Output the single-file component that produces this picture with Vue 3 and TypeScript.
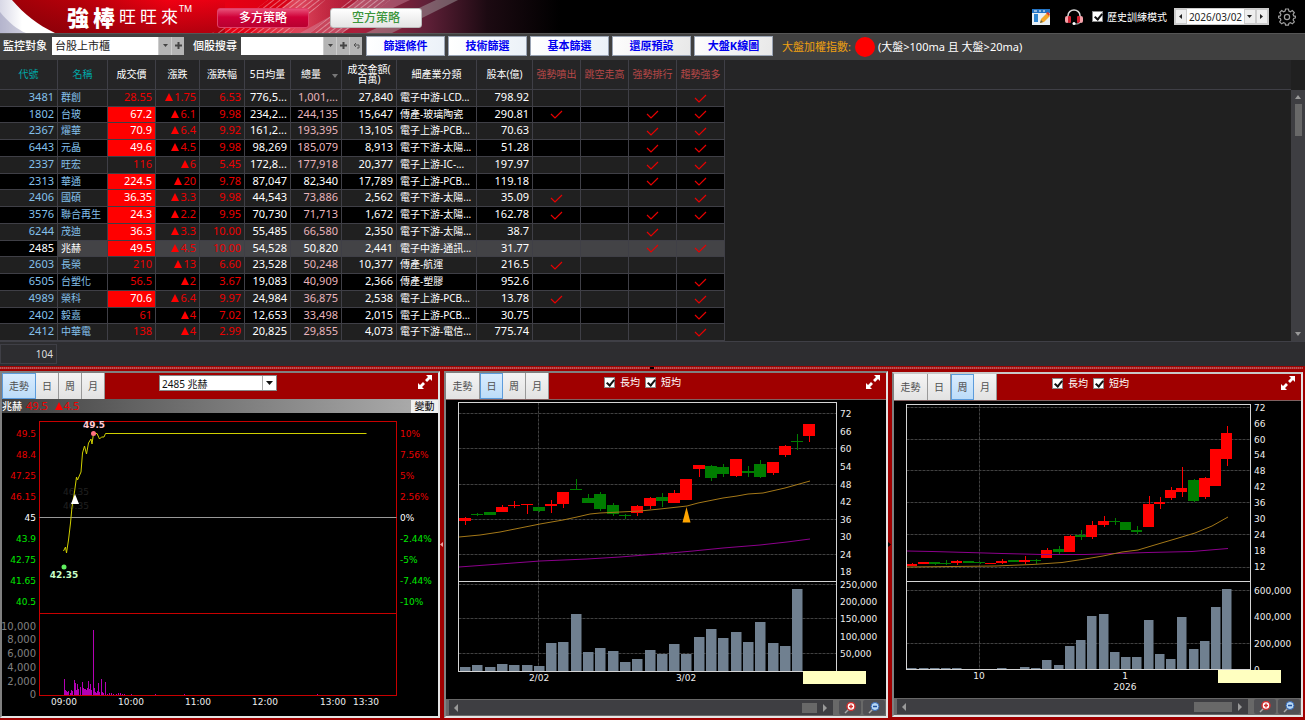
<script setup lang="ts">
import { ref } from 'vue'

interface Stock {
  code: string
  name: string
  price: string
  limit: boolean
  change: string
  pct: string
  avg: string
  total: string
  plain?: boolean
  amount: string
  sector: string
  capital: string
  marks: string
}

const raw: [string, string, string, number, string, string, string, string, string, string, string, string][] = [
  ['3481', '群創', '28.55', 0, '1.75', '6.53', '776,5...', '1,001,...', '27,840', '電子中游-LCD...', '798.92', '0001'],
  ['1802', '台玻', '67.2', 1, '6.1', '9.98', '234,2...', '244,135', '15,647', '傳產-玻璃陶瓷', '290.81', '1011'],
  ['2367', '燿華', '70.9', 1, '6.4', '9.92', '161,2...', '193,395', '13,105', '電子上游-PCB...', '70.63', '0011'],
  ['6443', '元晶', '49.6', 1, '4.5', '9.98', '98,269', '185,079', '8,913', '電子下游-太陽...', '51.28', '0011'],
  ['2337', '旺宏', '116', 0, '6', '5.45', '172,8...', '177,918', '20,377', '電子上游-IC-...', '197.97', '0011'],
  ['2313', '華通', '224.5', 1, '20', '9.78', '87,047', '82,340', '17,789', '電子上游-PCB...', '119.18', '0011'],
  ['2406', '國碩', '36.35', 1, '3.3', '9.98', '44,543', '73,886', '2,562', '電子下游-太陽...', '35.09', '1001'],
  ['3576', '聯合再生', '24.3', 1, '2.2', '9.95', '70,730', '71,713', '1,672', '電子下游-太陽...', '162.78', '1011'],
  ['6244', '茂迪', '36.3', 1, '3.3', '10.00', '55,485', '66,580', '2,350', '電子下游-太陽...', '38.7', '0010'],
  ['2485', '兆赫', '49.5', 1, '4.5', '10.00', '54,528', '50,820', '2,441', '電子中游-通訊...', '31.77', '0011'],
  ['2603', '長榮', '210', 0, '13', '6.60', '23,528', '50,248', '10,377', '傳產-航運', '216.5', '1000'],
  ['6505', '台塑化', '56.5', 0, '2', '3.67', '19,083', '40,909', '2,366', '傳產-塑膠', '952.6', '0001'],
  ['4989', '榮科', '70.6', 1, '6.4', '9.97', '24,984', '36,875', '2,538', '電子上游-PCB...', '13.78', '1001'],
  ['2402', '毅嘉', '61', 0, '4', '7.02', '12,653', '33,498', '2,015', '電子上游-PCB...', '30.75', '0001'],
  ['2412', '中華電', '138', 0, '4', '2.99', '20,825', '29,855', '4,073', '電子下游-電信...', '775.74', '0001'],
]
const stocks: Stock[] = raw.map((r) => ({
  code: r[0], name: r[1], price: r[2], limit: r[3] === 1, change: r[4], pct: r[5], avg: r[6],
  total: r[7], plain: r[7] === '82,340' || r[7] === '50,820', amount: r[8], sector: r[9], capital: r[10], marks: r[11],
}))
const selected = ref('2485')

const columns = [
  { t: '代號', c: 'key' }, { t: '名稱', c: 'key' }, { t: '成交價', c: '' }, { t: '漲跌', c: '' },
  { t: '漲跌幅', c: '' }, { t: '5日均量', c: '' }, { t: '總量', c: 'sort' }, { t: '成交金額(\n百萬)', c: '' },
  { t: '細產業分類', c: '' }, { t: '股本(億)', c: '' }, { t: '強勢噴出', c: 'flag' }, { t: '跳空走高', c: 'flag' },
  { t: '強勢排行', c: 'flag' }, { t: '趨勢強多', c: 'flag' },
]
const filters = ['篩選條件', '技術篩選', '基本篩選', '還原預設', '大盤K線圖']
const tabs = ['走勢', '日', '周', '月']

/* intraday chart */
const priceTicks: [number, string, string, string][] = [
  [433, '49.5', '10%', 'up'], [454, '48.4', '7.56%', 'up'], [475, '47.25', '5%', 'up'], [496, '46.15', '2.56%', 'up'],
  [517, '45', '0%', 'flat'], [538, '43.9', '-2.44%', 'down'], [559, '42.75', '-5%', 'down'],
  [580, '41.65', '-7.44%', 'down'], [601, '40.5', '-10%', 'down'],
]
const volTicks: [number, string][] = [[626, '10,000'], [639, '8,000'], [653, '6,000'], [667, '4,000'], [681, '2,000'], [694, '0']]
const hours: [number, string][] = [[64, '09:00'], [131, '10:00'], [198, '11:00'], [265, '12:00'], [333, '13:00'], [366, '13:30']]
const ticks: [number, number][] = [
  [64, 16], [65, 5], [66, 4], [67, 3], [68, 4], [70, 2], [71, 5], [72, 4], [74, 15], [75, 12], [76, 5], [77, 11], [78, 6],
  [80, 8], [82, 13], [83, 7], [84, 6], [85, 6], [86, 5], [87, 7], [88, 14], [89, 6], [90, 11], [91, 5],
  [93, 65], [94, 7], [95, 3], [96, 2], [97, 4], [98, 12], [99, 3], [101, 16], [102, 3], [103, 2], [105, 13], [107, 1], [109, 2],
  [111, 2], [113, 1], [116, 1], [118, 2], [120, 2], [122, 1], [124, 1], [131, 1], [155, 1], [184, 1], [317, 1],
]

/* candle charts: [rise, body top, body bottom, high, low], a third of a pixel per unit */
type Bar = [number, number, number, number, number]
interface Chart {
  id: string
  view: string
  active: string
  frame: { l: number; r: number; t: number; m: number; b: number }
  x0: number
  step: number
  body: number
  bars: Bar[]
  vols: number[]
  slow: string
  fast: string
  hgrid: number[]
  vgrid: number
  labels: [number, string][]
  dates: [number, number, string][]
  tip: { x: number; y: number }
  marker?: string
}
const daily: Chart = {
  id: 'd', view: '446 400 440 299', active: '日',
  frame: { l: 458.5, r: 836.5, t: 402.5, m: 581.5, b: 671.5 },
  x0: 465, step: 12.3, body: 12,
  bars: [
    [1, 474, 484, 471, 495], [0, 462, 465, 460, 468], [0, 456, 465, 456, 465], [1, 441, 456, 436, 456], [1, 435, 438, 424, 444],
    [1, 432, 436, 432, 462], [0, 441, 453, 441, 456], [1, 432, 438, 420, 458], [1, 396, 432, 396, 443], [0, 386, 389, 358, 389],
    [0, 414, 429, 402, 430], [0, 402, 447, 397, 452], [0, 434, 462, 430, 467], [0, 465, 468, 463, 477], [1, 438, 459, 436, 467],
    [1, 415, 438, 411, 447], [0, 411, 424, 400, 440], [1, 399, 429, 391, 430], [1, 358, 420, 358, 420], [1, 315, 327, 315, 351],
    [0, 318, 355, 316, 363], [0, 321, 342, 312, 350], [1, 297, 348, 297, 352], [0, 332, 340, 318, 350], [0, 312, 351, 300, 355],
    [1, 307, 339, 305, 344], [1, 258, 286, 256, 290], [0, 242, 247, 222, 271], [1, 193, 227, 193, 245],
  ],
  vols: [922, 916, 922, 911, 916, 916, 919, 848, 845, 762, 877, 865, 874, 905, 898, 871, 883, 852, 881, 831, 807, 833, 817, 845, 786, 850, 859, 688],
  fast: '459,537 480,535 500,532 520,528 540,524 563,520 577,517 590,514 600,513 620,512 640,511 660,509 687,506 698,503 723,498 737,496 748,494 763,493 785,488 810,481',
  slow: '459,567 500,564 540,561 587,559 620,557 670,553 693,551 723,548 760,545 787,542 810,539',
  hgrid: [413.5, 448.5, 484.5, 519.5, 554.5, 584.5, 618.5, 653.5], vgrid: 538.5,
  labels: [
    [413, '72'], [431, '66'], [448, '60'], [466, '54'], [484, '48'], [501, '42'], [519, '36'], [536, '30'], [554, '24'], [571, '18'],
    [584, '250,000'], [601, '200,000'], [618, '150,000'], [636, '100,000'], [653, '50,000'],
  ],
  dates: [[539, 678, '2/02'], [686, 678, '3/02']],
  tip: { x: 803, y: 671 },
  marker: '686.5,507 682.5,522.5 690.5,522.5',
}
const weekly: Chart = {
  id: 'w', view: '894 401 407 297', active: '周',
  frame: { l: 906.5, r: 1250.5, t: 404.5, m: 581.5, b: 669.5 },
  x0: 912.4, step: 11.25, body: 11,
  bars: [
    [1, 612, 619, 609, 619], [1, 606, 612, 606, 612], [0, 607, 612, 605, 614], [0, 609, 612, 600, 614], [1, 603, 610, 599, 614],
    [0, 603, 610, 603, 610], [0, 607, 610, 607, 611], [1, 609, 612, 609, 612], [1, 603, 609, 598, 612], [0, 600, 606, 600, 606],
    [1, 600, 606, 588, 611], [0, 600, 603, 598, 612], [1, 570, 594, 563, 594], [0, 568, 576, 557, 582], [1, 527, 575, 525, 575],
    [0, 524, 531, 509, 539], [1, 496, 531, 482, 537], [1, 482, 495, 468, 500], [0, 484, 487, 475, 495], [0, 486, 510, 486, 510],
    [0, 511, 515, 499, 521], [1, 432, 502, 409, 502], [1, 427, 431, 411, 446], [1, 389, 414, 382, 420], [1, 384, 396, 320, 411],
    [0, 360, 422, 356, 426], [1, 355, 411, 351, 416], [1, 267, 377, 267, 377], [1, 220, 296, 198, 317],
  ],
  vols: [923, 925, 925, 924, 924, 926, 927, 927, 924, 926, 921, 925, 900, 914, 859, 840, 769, 762, 876, 892, 890, 781, 883, 898, 772, 868, 843, 742, 688],
  fast: '907,567 952,566.5 995,566 1032,564.5 1062,562.5 1085,559 1103,556 1122,552 1138,550 1158,544 1175,539 1195,533 1212,526 1228,517',
  slow: '907,551 932,551.5 968,552.5 1002,553.5 1042,554.5 1085,554.5 1115,553.5 1148,552.5 1192,551.5 1228,548.5',
  hgrid: [407.5, 439.5, 470.5, 502.5, 534.5, 567.5, 590.5, 643.5], vgrid: 979.5,
  labels: [
    [407, '72'], [423, '66'], [439, '60'], [454, '54'], [470, '48'], [486, '42'], [502, '36'], [518, '30'], [534, '24'], [550, '18'], [566, '12'],
    [590, '600,000'], [616, '400,000'], [643, '200,000'], [669, '0'],
  ],
  dates: [[979, 676, '10'], [1125, 676, '1'], [1125, 687, '2026']],
  tip: { x: 1218, y: 670 },
}
const charts = [daily, weekly]
const py = (v: number) => Math.round(360 + v / 3)
const px = (c: Chart, i: number) => Math.round(c.x0 + c.step * i)
</script>

<template>
  <div class="app">
    <header class="banner">
      <svg class="art" width="560" height="33" viewBox="0 0 560 33" aria-hidden="true">
        <defs>
          <linearGradient id="glow" x1="0" x2="1">
            <stop offset="0" stop-color="#9c0008" /><stop offset=".15" stop-color="#b8000a" />
            <stop offset=".3" stop-color="#f00012" /><stop offset=".5" stop-color="#dc0014" />
            <stop offset=".64" stop-color="#a8203c" /><stop offset=".76" stop-color="#602038" />
            <stop offset=".87" stop-color="#1c0a12" /><stop offset="1" stop-color="#000" />
          </linearGradient>
          <linearGradient id="curve" x1="0" x2="1">
            <stop offset="0" stop-color="#d8d8e6" /><stop offset=".4" stop-color="#fff" /><stop offset="1" stop-color="#fff" />
          </linearGradient>
          <linearGradient id="edge" x1="0" x2="0" y1="0" y2="1">
            <stop offset="0" stop-color="#600008" stop-opacity="0" /><stop offset="1" stop-color="#600008" stop-opacity=".4" />
          </linearGradient>
          <linearGradient id="haze" x1="0" x2="1">
            <stop offset="0" stop-color="#fff" stop-opacity=".05" /><stop offset=".5" stop-color="#f0a0b8" stop-opacity=".4" />
            <stop offset="1" stop-color="#c06080" stop-opacity="0" />
          </linearGradient>
          <pattern id="diag" width="4" height="4" patternUnits="userSpaceOnUse" patternTransform="rotate(52)">
            <rect width="1" height="4" fill="#fff" opacity=".38" />
          </pattern>
        </defs>
        <rect width="560" height="33" fill="url(#glow)" />
        <rect width="225" height="33" fill="url(#edge)" />
        <path d="M250 33 L292 0 H352 L310 33Z" fill="url(#haze)" />
        <path d="M360 0 H410 L340 33 H300Z" fill="#d89aae" opacity=".38" />
        <path d="M212 33 C235 24 250 14 268 0 H325 L290 33Z" fill="url(#diag)" />
        <path d="M310 33 L350 0 H390 L345 33Z" fill="url(#diag)" />
        <path d="M392 33 L458 0 H436 L366 33Z" fill="#aaa" opacity=".45" />
        <path d="M0 0 H12 C24 14 38 25 55 33 H0Z" fill="url(#curve)" />
        <path d="M0 12 C8 22 18 30 26 33 H0Z" fill="#8080a8" opacity=".4" />
      </svg>
      <h1 class="logo"><b>強</b><b>棒</b><span>旺</span><span>旺</span><span>來</span><sup>TM</sup></h1>
      <button class="side long" type="button">多方策略</button>
      <button class="side short" type="button">空方策略</button>
      <div class="tools">
        <button class="ico" type="button" aria-label="版面">
          <svg width="18" height="16" viewBox="0 0 18 16">
            <rect width="18" height="16" fill="#e8f0f6" /><rect width="18" height="4" fill="#2474c4" />
            <path d="M2 2h3M7 2h2M11 2h2" stroke="#fff" /><rect x="2" y="5" width="4" height="8" fill="#2e86d2" />
            <path d="M8 14l1-4 6-6 3 3-6 6z" fill="#f6a828" /><path d="M14 4l2-1 2 2-1 2z" fill="#e03a28" /><path d="M8 14l1-3 2 2z" fill="#664" />
          </svg>
        </button>
        <button class="ico" type="button" aria-label="客服">
          <svg width="18" height="16" viewBox="0 0 18 16">
            <path d="M3 8V6.500a6 5.500 0 0 1 12 0V8" fill="none" stroke="#d8d8d8" stroke-width="1.500" />
            <rect x="0" y="7" width="4" height="7" rx="2" fill="#f4a0a8" /><rect x="3" y="7" width="3" height="7" rx="1" fill="#d02030" />
            <rect x="14" y="7" width="4" height="7" rx="2" fill="#f4a0a8" /><rect x="12" y="7" width="3" height="7" rx="1" fill="#d02030" />
            <path d="M15 13c0 2-3 2-5 2" fill="none" stroke="#ccc" /><circle cx="9" cy="14.500" r="1.500" fill="#fff" />
          </svg>
        </button>
        <label class="tick"><input type="checkbox" checked />歷史訓練模式</label>
        <div class="date">
          <button type="button" aria-label="前一日"><svg width="4" height="6"><path d="M3 0v5L0 2.500z" fill="#222" /></svg></button>
          <input type="text" value="2026/03/02" aria-label="日期" />
          <button type="button" aria-label="開啟日曆"><svg width="6" height="4"><path d="M0 0h5L2.500 3z" fill="#222" /></svg></button>
          <button type="button" aria-label="後一日"><svg width="4" height="6"><path d="M0 0v5l3-2.500z" fill="#222" /></svg></button>
        </div>
        <button class="ico" type="button" aria-label="設定">
          <svg width="18" height="18" viewBox="0 0 18 18" fill="none" stroke="#a0a0a0" stroke-width="1.200">
            <path d="M7.600 1h2.800l.5 2 1.500.7 1.900-1.200 2 2-1.200 1.900.6 1.500 2 .4v1.500l-2 .6-.6 1.500 1.200 1.900-2 2-1.900-1.200-1.500.7-.5 1.900H7.600l-.5-1.900-1.500-.7-1.900 1.200-2-2 1.200-1.900-.6-1.500-2-.6V8.300l2-.4.6-1.500-1.200-1.900 2-2 1.900 1.200 1.500-.7z" />
            <circle cx="9" cy="9" r="2.600" />
          </svg>
        </button>
      </div>
    </header>

    <div class="toolbar">
      <label for="universe">監控對象</label>
      <div class="combo">
        <select id="universe" class="wide"><option>台股上市櫃</option></select>
        <button type="button" aria-label="展開"><svg width="5" height="3"><path d="M0 0h5L2.500 3z" fill="#444" /></svg></button>
        <button type="button" aria-label="新增"><svg width="7" height="7"><path d="M3.500 0v7M0 3.500h7" stroke="#444" stroke-width="2" /></svg></button>
      </div>
      <label for="search" class="second">個股搜尋</label>
      <div class="combo">
        <input id="search" type="text" />
        <button type="button" aria-label="展開"><svg width="5" height="3"><path d="M0 0h5L2.500 3z" fill="#444" /></svg></button>
        <button type="button" aria-label="加入"><svg width="7" height="7"><path d="M3.500 0v7M0 3.500h7" stroke="#444" stroke-width="2" /></svg></button>
        <button type="button" aria-label="返回"><svg width="7" height="7" fill="none" stroke="#555"><path d="M3 1L1 3l2 2M1 3h5v3H4" /></svg></button>
      </div>
      <div class="filters"><button v-for="f in filters" :key="f" type="button">{{ f }}</button></div>
      <span class="index">大盤加權指數:</span><i class="lamp"></i><span class="rule">(大盤&gt;100ma 且 大盤&gt;20ma)</span>
    </div>

    <section class="sheet">
      <table>
        <colgroup>
          <col class="c58" /><col class="c50" /><col class="c48" /><col class="c44" /><col class="c45" /><col class="c46" /><col class="c51" />
          <col class="c55" /><col class="c80" /><col class="c56" /><col class="c48" /><col class="c48" /><col class="c48" /><col class="c48" /><col />
        </colgroup>
        <thead>
          <tr>
            <th v-for="c in columns" :key="c.t" :class="c.c" scope="col">{{ c.t }}<svg v-if="c.c === 'sort'" width="6" height="4"><path d="M0 0h6L3 4z" fill="#777" /></svg></th>
            <td class="rest"></td>
          </tr>
        </thead>
        <tbody>
          <tr v-for="s in stocks" :key="s.code" :class="{ on: s.code === selected }" @click="selected = s.code">
            <td class="id">{{ s.code }}</td>
            <td class="name">{{ s.name }}</td>
            <td class="red" :class="{ limit: s.limit }">{{ s.price }}</td>
            <td class="red"><svg width="8" height="8"><path d="M0 8h8L4 0z" fill="#f00" /></svg>{{ s.change }}</td>
            <td class="red">{{ s.pct }}</td>
            <td>{{ s.avg }}</td>
            <td :class="{ pink: !s.plain }">{{ s.total }}</td>
            <td>{{ s.amount }}</td>
            <td class="sector">{{ s.sector }}</td>
            <td>{{ s.capital }}</td>
            <td v-for="(m, i) in s.marks" :key="i" class="mark"><svg v-if="m === '1'" width="13" height="9" fill="none" stroke="#e80000" stroke-width="1.200"><path d="M1 4l4 4 7-7" /></svg></td>
            <td class="rest"></td>
          </tr>
        </tbody>
      </table>
      <div class="vbar">
        <svg width="8" height="5"><path d="M1 5h6L4 1z" fill="#999" /></svg>
        <i></i>
        <svg width="8" height="5"><path d="M1 0h6L4 4z" fill="#999" /></svg>
      </div>
    </section>
    <div class="summary"><output>104</output></div>

    <main class="dock">
      <div class="split"><i></i></div>
      <div class="panels">
        <section class="panel">
          <div class="head">
            <div class="tabs"><button v-for="t in tabs" :key="t" type="button" :class="{ on: t === '走勢' }">{{ t }}</button></div>
            <div class="pick">
              <select aria-label="股票"><option>2485 兆赫</option></select>
              <svg width="7" height="4"><path d="M0 0h7L3.500 4z" fill="#111" /></svg>
            </div>
            <button class="expand" type="button" aria-label="放大"><svg width="16" height="16" viewBox="0 0 16 16" fill="#fff"><path d="M15 1v6l-2-2-3 3-2-2 3-3-2-2zM1 15V9l2 2 3-3 2 2-3 3 2 2z" /></svg></button>
          </div>
          <div class="quote"><b>兆赫</b><span>49.5</span><span><svg width="8" height="8"><path d="M0 8h8L4 0z" fill="#f00" /></svg>4.5</span><button type="button">變動</button></div>
          <svg class="plot" viewBox="2 413 436 303">
            <g fill="none" stroke="#c80000"><rect x="39.500" y="421.500" width="357" height="274" /><path d="M39.500 613.500h357" /></g>
            <path d="M39.500 517.500h357" stroke="#999" />
            <g v-for="t in priceTicks" :key="t[0]" :class="t[3]"><text x="36" :y="t[0] + 4" text-anchor="end">{{ t[1] }}</text><text x="400" :y="t[0] + 4">{{ t[2] }}</text></g>
            <text v-for="t in volTicks" :key="t[0]" class="vol" x="36" :y="t[0] + 4" text-anchor="end">{{ t[1] }}</text>
            <text v-for="t in hours" :key="t[0]" :x="t[0]" y="705" text-anchor="middle">{{ t[1] }}</text>
            <rect v-for="t in ticks" :key="t[0]" :x="t[0]" :y="695 - t[1]" width="1" :height="t[1]" fill="#b400b4" />
            <g class="ghost"><text x="76" y="495" text-anchor="middle">46.35</text><text x="76" y="509" text-anchor="middle">46.35</text></g>
            <polyline points="63.500,551 65.500,547 66.500,553 68.500,540 70.500,523 72,507 74.500,492 76.500,477 77.500,480 81,472 82.500,453 84.500,446 86.500,454 88.500,443 91,439 92,444 93.500,433.500 97,433.500 99.500,439 101.500,437 104,437 105.500,433.500 366.500,433.500" fill="none" stroke="#d0d000" />
            <path d="M71 504h8l-4-10z" fill="#fff" />
            <circle cx="93.500" cy="433.500" r="2.500" fill="#ff7080" /><circle cx="64" cy="567" r="2.500" fill="#60f060" />
            <text class="hi" x="94" y="428" text-anchor="middle">49.5</text><text class="lo" x="64" y="578" text-anchor="middle">42.35</text>
          </svg>
        </section>

        <section v-for="c in charts" :key="c.id" class="panel" :class="c.id">
          <div class="head">
            <div class="tabs"><button v-for="t in tabs" :key="t" type="button" :class="{ on: t === c.active }">{{ t }}</button></div>
            <div class="mas">
              <label class="tick"><input type="checkbox" checked />長均</label>
              <label class="tick"><input type="checkbox" checked />短均</label>
            </div>
            <button class="expand" type="button" aria-label="放大"><svg width="16" height="16" viewBox="0 0 16 16" fill="#fff"><path d="M15 1v6l-2-2-3 3-2-2 3-3-2-2zM1 15V9l2 2 3-3 2 2-3 3 2 2z" /></svg></button>
          </div>
          <svg class="plot" :viewBox="c.view">
            <g stroke="#404040" stroke-dasharray="3 1">
              <line v-for="y in c.hgrid" :key="y" :x1="c.frame.l" :x2="c.frame.r" :y1="y" :y2="y" />
              <line :x1="c.vgrid" :x2="c.vgrid" :y1="c.frame.t" :y2="c.frame.b" />
            </g>
            <rect v-for="(v, i) in c.vols" :key="'v' + i" :x="px(c, i) - 5" :y="py(v)" :width="c.body - 1.5" :height="c.frame.b - py(v)" fill="#708090" />
            <g v-for="(b, i) in c.bars" :key="'b' + i" :fill="b[0] ? '#ff0000' : '#007d00'">
              <rect :x="px(c, i)" :y="py(b[3])" width="1" :height="py(b[4]) - py(b[3])" />
              <rect :x="px(c, i) - 6" :y="py(b[1])" :width="c.body" :height="Math.max(1, py(b[2]) - py(b[1]))" />
            </g>
            <polyline :points="c.slow" fill="none" stroke="#8c008c" /><polyline :points="c.fast" fill="none" stroke="#a47818" />
            <g fill="none" stroke="#d4d4d4"><rect :x="c.frame.l" :y="c.frame.t" :width="c.frame.r - c.frame.l" :height="c.frame.b - c.frame.t" /><line :x1="c.frame.l" :x2="c.frame.r" :y1="c.frame.m" :y2="c.frame.m" /></g>
            <polygon v-if="c.marker" :points="c.marker" fill="#ffa500" />
            <text v-for="l in c.labels" :key="l[0]" :x="c.frame.r + 3.5" :y="l[0] + 4">{{ l[1] }}</text>
            <text v-for="d in c.dates" :key="d[2]" :x="d[0]" :y="d[1] + 3" text-anchor="middle">{{ d[2] }}</text>
            <rect :x="c.tip.x" :y="c.tip.y" width="63" height="13" fill="#ffffc0" />
          </svg>
          <div class="foot">
            <div class="hbar">
              <svg width="5" height="8"><path d="M5 0v8L1 4z" fill="#999" /></svg><i></i><svg width="5" height="8"><path d="M0 0v8l4-4z" fill="#999" /></svg>
            </div>
            <button type="button" aria-label="放大時間軸"><svg width="12" height="12" viewBox="0 0 12 12"><path d="M1 11l4-4" stroke="#aaa" stroke-width="1.500" /><circle cx="7" cy="4.500" r="4" fill="#fff" stroke="#d03030" stroke-width="1.500" /><path d="M7 2.500v4M5 4.500h4" stroke="#d03030" stroke-width="1.500" /></svg></button>
            <button type="button" aria-label="縮小時間軸"><svg width="12" height="12" viewBox="0 0 12 12"><path d="M1 11l4-4" stroke="#aaa" stroke-width="1.500" /><circle cx="7" cy="4.500" r="4" fill="#b8d8f4" stroke="#3468b8" stroke-width="1" /><path d="M5 4.500h4" stroke="#2050a0" stroke-width="1.500" /></svg></button>
          </div>
        </section>
        <svg class="grip g1" width="3" height="5"><path d="M3 0v5L0 2.500z" fill="#f0a0a0" /></svg>
        <svg class="grip g2" width="3" height="5"><path d="M0 0v5l3-2.500z" fill="#000" /></svg>
      </div>
    </main>
  </div>
</template>

<style>
html, body { background: #202020; }
</style>

<style scoped>
* { box-sizing: border-box; }
.app { display: flex; flex-direction: column; min-height: 100vh; overflow: hidden; font: 11px/16px "Noto Sans", "Noto Sans CJK TC", sans-serif; color: #fff; background: #202020; }
button, input, select { font: inherit; color: inherit; margin: 0; padding: 0; border: 0; border-radius: 0; background: none; appearance: none; }
svg { display: block; flex: none; }
.banner { position: relative; display: flex; align-items: center; height: 33px; padding-left: 67px; background: #000; }
.art { position: absolute; left: 0; top: 0; }
.logo { position: relative; display: flex; align-items: center; gap: 4px; width: 150px; margin: 0; font-size: 17px; font-weight: 400; line-height: 28px; }
.logo b { font-size: 22px; font-weight: 900; }
.logo sup { align-self: flex-start; margin-left: -3px; font-size: 9px; line-height: 12px; }
.side { position: relative; width: 92px; height: 20px; margin: 3px 21px 0 0; border-radius: 3px; font-size: 12px; font-weight: 500; line-height: 18px; }
.long { background: linear-gradient(#e85078, #d00038 45%, #b80030); border: 1px solid #e04068; }
.short { background: linear-gradient(#fff, #e4e4e4); border: 1px solid #bbb; color: #3c963c; }
.tools { display: flex; align-items: center; gap: 9px; margin-left: auto; padding-right: 9px; font-size: 10px; }
.ico { display: flex; }
.ico:first-child { margin-right: 6px; }
.tick { display: flex; align-items: center; gap: 5px; font-size: 10px; }
.tools .tick { gap: 4px; margin-right: -2px; }
.tick input { width: 11px; height: 11px; background: #fff; border: 1px solid #888; position: relative; }
.tick input:checked::after { content: ""; position: absolute; left: 3px; top: 0; width: 3px; height: 6px; border: solid #111; border-width: 0 2px 2px 0; transform: rotate(40deg); }
.date { display: flex; width: 95px; height: 17px; background: #fff; border: 1px solid #ccc; color: #222; }
.date button { display: flex; align-items: center; justify-content: center; width: 12px; background: #eee; border: 1px solid #ccc; }
.date input { flex: 1; min-width: 0; text-align: center; }

.toolbar { display: flex; align-items: center; height: 27px; padding: 0 0 3px 3px; background: #404040; border-top: 1px solid #555; }
.toolbar > label { width: 49px; font-weight: 500; }
.toolbar > .second { margin-left: 9px; width: 48px; }
.combo { display: flex; height: 18px; background: #fff; color: #222; }
.combo .wide { width: 106px; padding-left: 3px; }
.combo input { width: 82px; }
.combo button { display: flex; align-items: center; justify-content: center; width: 13px; background: #b4b4b4; border-left: 1px solid #ccc; }
.filters { display: flex; gap: 3px; margin-left: 4px; }
.filters button { width: 79px; height: 20px; background: linear-gradient(100deg, #fff, #ebf1f8); border: 1px solid #9aa4b4; color: #0000f0; font-weight: 700; line-height: 18px; }
.filters button:nth-child(n + 4) { background: linear-gradient(100deg, #fdfdfd, #e8e8e8); }
.index { margin: 2px 4px 0 9px; color: #f0a010; }
.lamp { width: 20px; height: 20px; margin-top: 2px; border-radius: 50%; background: #f00; }
.rule { margin: 2px 0 0 3px; }

.sheet { display: flex; overflow: hidden; }
table { flex: 1; min-width: 0; width: 100%; table-layout: fixed; border-collapse: separate; border-spacing: 0; }
.c58 { width: 58px; } .c50 { width: 50px; } .c48 { width: 48px; } .c44 { width: 44px; } .c45 { width: 45px; }
.c46 { width: 46px; } .c51 { width: 51px; } .c55 { width: 55px; } .c56 { width: 56px; } .c80 { width: 80px; }
th, td { padding: 0 3px; border: solid #3f3f46; border-width: 0 1px 1px 0; overflow: hidden; white-space: nowrap; }
th { height: 30px; padding: 0 0 2px; background: #252526; font-size: 10px; font-weight: 400; line-height: 10px; white-space: pre-line; text-align: center; }
thead .rest { background: #252526; border-right: 0; }
.key { color: #00a8a8; }
.flag { color: #b84848; }
.sort svg { display: inline-block; margin: 3px 0 0 11px; vertical-align: middle; }
.sort { text-align: right; padding-right: 3px; }
tbody td { height: 17px; line-height: 14px; text-align: right; vertical-align: top; background: #202020; }
tbody tr:nth-child(4n + 2) td { height: 16px; }
tbody tr:nth-child(even) td { background: #000; }
tbody tr.on td { background: #434346; }
tbody td.id, tbody td.name { color: #84c0ec; }
tbody td.name, tbody td.sector { text-align: left; font-size: 10px; line-height: 15px; }
tbody td.red { color: #ec0000; }
tbody td.red.limit { color: #fff; background: #f00 !important; }
tbody td svg { display: inline-block; margin-right: 1px; }
tbody td.pink { color: #e8b4bc; }
tbody td.mark { text-align: center; vertical-align: middle; line-height: 8px; }
tbody tr.on td.id { background: #000; color: #fff; }
tbody tr.on td.name { color: #fff; }
tbody tr td.rest { background: #202020 !important; border: 0; }
.vbar { display: flex; flex-direction: column; align-items: center; width: 14px; margin-top: 30px; padding: 4px 0; background: #3e3e42; }
.vbar i { width: 7px; height: 32px; margin: 5px 0 auto; background: #686868; }
.summary { height: 25px; padding-top: 2px; background: #2d2d30; border-top: 1px solid #3f3f46; }
.summary output { display: block; width: 57px; height: 20px; padding-right: 3px; border: 1px solid #3f3f46; line-height: 18px; text-align: right; font-size: 10px; color: #ddd; }

.dock { flex: 1; display: flex; flex-direction: column; background: #a00000; padding: 0 2px 2px 0; }
.split { display: flex; justify-content: center; height: 5px; padding-top: 1px; }
.split::before { content: ""; flex: 1; height: 2px; background: repeating-linear-gradient(90deg, #b85858 0 1px, #a83030 1px 2px); }
.split::after { content: ""; flex: 1; height: 2px; background: repeating-linear-gradient(90deg, #b85858 0 1px, #a83030 1px 2px); }
.split i { width: 4px; height: 2px; background: #000; }
.panels { position: relative; flex: 1; display: grid; grid-template-columns: 440fr 444fr 411fr; column-gap: 4px; align-items: start; }
.panel { min-width: 0; border: 2px solid #808080; border-right-color: #e4e4e4; border-bottom-color: #e4e4e4; background: #000; }
.panel.w { margin-top: 1px; border-top-color: #c8c8c8; }
.head { position: relative; display: flex; align-items: flex-start; height: 26px; background: #a00000; }
.d .head, .w .head { height: 27px; border-bottom: 1px solid #806060; }
.tabs { display: flex; height: 26px; }
.tabs button { width: 23px; background: linear-gradient(#f4f4f4, #e2e2e2); border-right: 1px solid #999; color: #505050; font-size: 10px; }
.tabs button:first-child { width: 34px; }
.tabs .on { background: linear-gradient(#d8ecff, #bcdcf8); border: 1px solid #5c9cdc; }
.pick { display: flex; align-items: center; width: 118px; height: 16px; margin: 2px 0 0 54px; background: #fff; border: 1px solid #888; color: #111; font-size: 10px; }
.pick select { flex: 1; height: 14px; padding-left: 2px; border-right: 1px solid #aaa; }
.pick svg { margin: 0 3px; }
.mas { display: flex; gap: 5px; margin: 1px 0 0 55px; }
.expand { margin: 1px 5px 0 auto; }
.quote { display: flex; align-items: center; gap: 4px; height: 14px; background: linear-gradient(90deg, #404040, #b0b0b0); color: #f00000; line-height: 14px; }
.quote b { color: #fff; font-size: 10px; font-weight: 500; }
.quote span { display: flex; align-items: center; gap: 1px; margin-right: 3px; }
.quote button { width: 27px; height: 13px; margin-left: auto; background: #f0f0f0; color: #000; font-size: 10px; line-height: 12px; }
.plot { width: 100%; height: auto; font: 9px "DejaVu Sans", sans-serif; }
.plot text { fill: #eee; }
.plot .up text { fill: #e80000; }
.plot .down text { fill: #00e800; }
.plot .flat text { fill: #fff; }
.plot .ghost text { fill: #202020; }
.plot .vol { fill: #808080; font-size: 10px; }
.plot .hi { fill: #ffc8d0; font-weight: 700; }
.plot .lo { fill: #c8ffc8; font-weight: 700; }
.foot { display: flex; align-items: stretch; gap: 2px; height: 17px; padding: 1px 1px 1px 3px; background: #686868; }
.hbar { flex: 1; display: flex; align-items: center; padding: 0 5px 0 4px; margin-right: 4px; background: #3e3e42; }
.hbar i { width: 15px; height: 10px; margin: 0 6px 0 auto; background: #686868; }
.w .hbar i { width: 38px; }
.foot button { display: flex; align-items: center; justify-content: center; width: 22px; background: #505054; border-radius: 2px; }
.grip { position: absolute; top: 171px; }
.g1 { left: calc((100% - 8px) * 440 / 1295); }
.g2 { left: calc((100% - 8px) * 884 / 1295 + 4px); }
</style>
